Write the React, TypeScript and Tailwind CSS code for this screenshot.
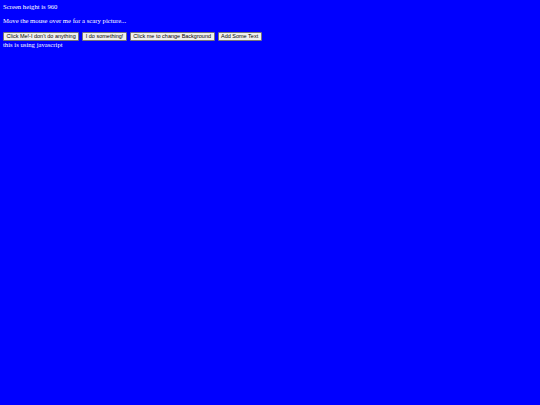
import React from 'react';

const btn =
  "bg-[#efefef] text-black border border-[#767676] rounded-[1px] px-[2.5px] py-[0.5px] text-[5.5px] leading-[6.8px] font-['Liberation_Sans',Arial,sans-serif]";

export default function App() {
  return (
    <div className="min-h-[405px] w-full bg-[#0000ff] text-white font-['Liberation_Serif','Times_New_Roman',serif] text-[6.7px] leading-[7.6px] p-[3px]">
      <div>Screen height is 960</div>
      <p className="mt-[6.5px] mb-[7px]">Move the mouse over me for a scary picture...</p>
      <div className="flex gap-[3px]">
        <button className={btn}>Click Me!-I don't do anything</button>
        <button className={btn}>I do something!</button>
        <button className={btn}>Click me to change Background</button>
        <button className={btn}>Add Some Text</button>
      </div>
      <div>this is using javascript</div>
    </div>
  );
}
